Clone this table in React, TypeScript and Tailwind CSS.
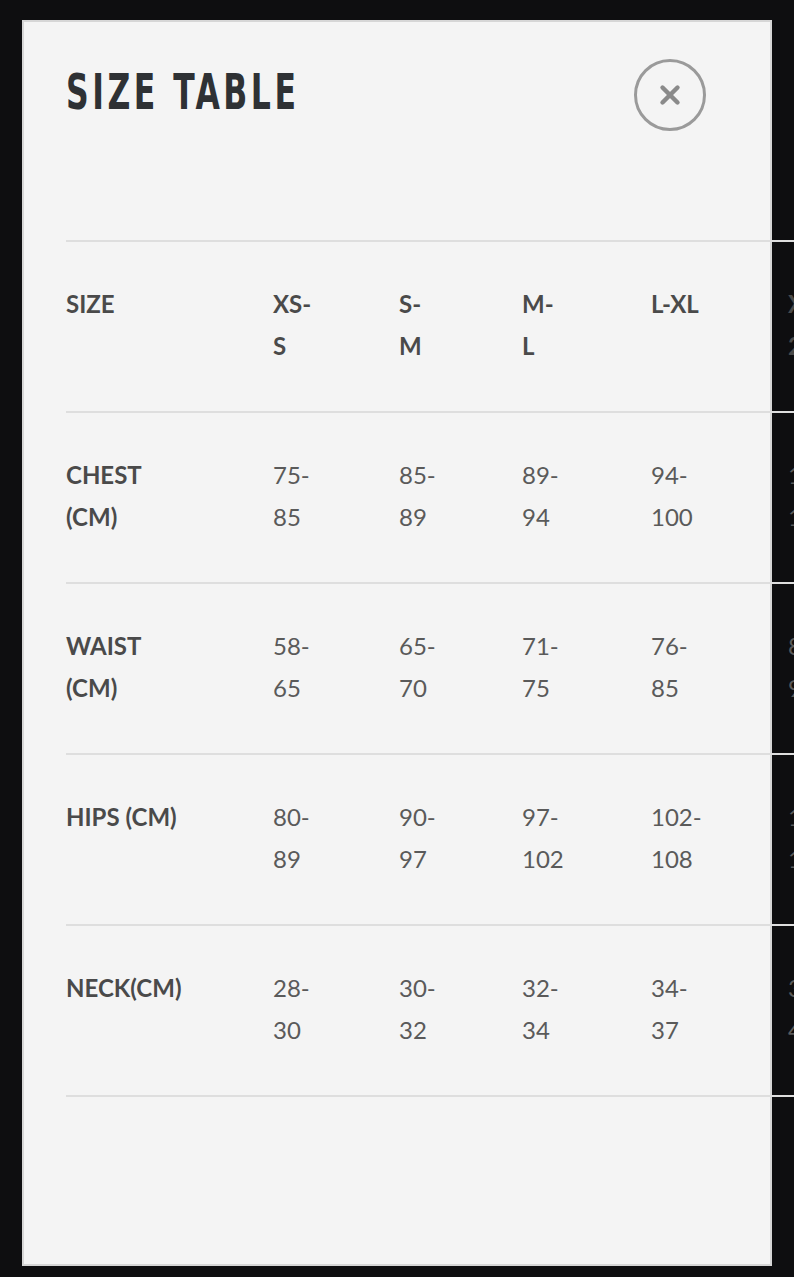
import { X } from "lucide-react";

type Row = { label: string[]; cells: string[][]; head?: boolean };

const rows: Row[] = [
  {
    label: ["SIZE"],
    cells: [["XS-", "S"], ["S-", "M"], ["M-", "L"], ["L-XL"], ["XL-", "2XL"]],
    head: true,
  },
  {
    label: ["CHEST", "(CM)"],
    cells: [["75-", "85"], ["85-", "89"], ["89-", "94"], ["94-", "100"], ["100-", "108"]],
  },
  {
    label: ["WAIST", "(CM)"],
    cells: [["58-", "65"], ["65-", "70"], ["71-", "75"], ["76-", "85"], ["85-", "95"]],
  },
  {
    label: ["HIPS (CM)"],
    cells: [["80-", "89"], ["90-", "97"], ["97-", "102"], ["102-", "108"], ["108-", "116"]],
  },
  {
    label: ["NECK(CM)"],
    cells: [["28-", "30"], ["30-", "32"], ["32-", "34"], ["34-", "37"], ["37-", "40"]],
  },
];

function Lines({ lines }: { lines: string[] }) {
  return (
    <>
      {lines.map((l, i) => (
        <span key={i} className="block whitespace-nowrap">
          {l}
        </span>
      ))}
    </>
  );
}

export default function App() {
  return (
    <div className="h-[1277px] w-[794px] overflow-hidden bg-[#0e0e10] pl-[22px] pt-[20px]">
      <div className="relative h-[1246px] w-[750px] border-2 border-[#d6d6d6] bg-[#f4f4f4]">
        {/* header */}
        <div className="flex items-start justify-between pl-[42px] pr-[64px]">
          <h2
            className="mt-[40px] origin-left scale-x-[0.7] text-[50px] font-bold leading-[60px] tracking-[0.1em] whitespace-nowrap text-[#2e3134]"
            style={{ fontFamily: '"DejaVu Sans Condensed", sans-serif' }}
          >
            SIZE TABLE
          </h2>
          <button className="mt-[37px] flex h-[72px] w-[72px] items-center justify-center rounded-full border-[3px] border-[#9a9a9a] text-[#8a8a8a]">
            <X size={30} strokeWidth={3.5} />
          </button>
        </div>

        {/* table */}
        <div
          className="mt-[109px] ml-[42px] w-[860px] border-b-2 border-[#dedede] text-[24px] leading-[42px]"
          style={{ fontFamily: 'Lato, "Open Sans", sans-serif' }}
        >
          {rows.map((r, i) => (
            <div
              key={i}
              className="grid grid-cols-[207px_126px_123px_129px_137px_135px] border-t-2 border-[#dedede] pt-[41px] pb-[44px]"
            >
              <div className="font-bold text-[#4a4a4a]">
                <Lines lines={r.label} />
              </div>
              {r.cells.map((c, j) => (
                <div
                  key={j}
                  className={r.head ? "font-bold text-[#4a4a4a]" : "text-[#5a5a5a]"}
                >
                  <Lines lines={c} />
                </div>
              ))}
            </div>
          ))}
        </div>
      </div>
    </div>
  );
}
